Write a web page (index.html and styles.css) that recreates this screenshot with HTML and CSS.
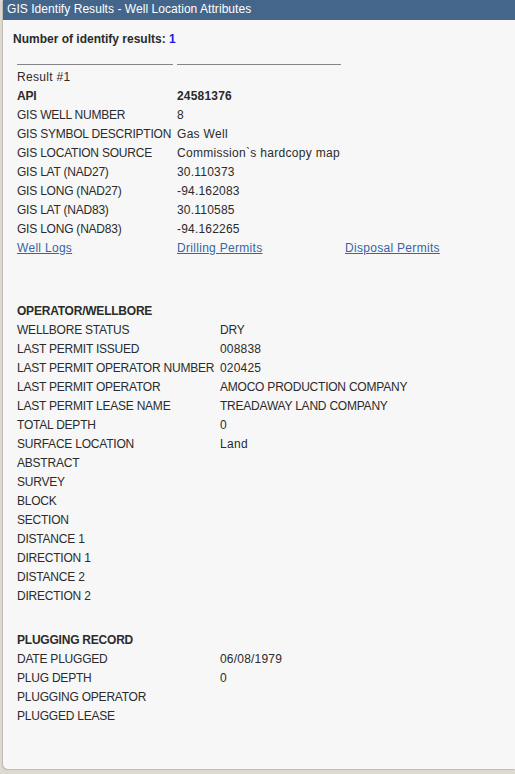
FILE: index.html
```html
<!DOCTYPE html>
<html>
<head>
<meta charset="utf-8">
<link rel="stylesheet" href="styles.css">
</head>
<body>
<div class="dialog">
  <div class="titlebar">GIS Identify Results - Well Location Attributes</div>
  <div class="content">
    <div class="count">Number of identify results: <span class="num">1</span></div>
    <div class="results">
      <div class="head">
        <div class="hcell c1"></div>
        <div class="hcell c2"></div>
      </div>
      <div class="grid g1">
        <div class="lc">Result #1</div><div></div><div></div>
        <div class="b">API</div><div class="b n">24581376</div><div></div>
        <div>GIS WELL NUMBER</div><div class="n">8</div><div></div>
        <div>GIS SYMBOL DESCRIPTION</div><div class="lc">Gas Well</div><div></div>
        <div>GIS LOCATION SOURCE</div><div class="lc">Commission`s hardcopy map</div><div></div>
        <div>GIS LAT (NAD27)</div><div class="n">30.110373</div><div></div>
        <div>GIS LONG (NAD27)</div><div class="n">-94.162083</div><div></div>
        <div>GIS LAT (NAD83)</div><div class="n">30.110585</div><div></div>
        <div>GIS LONG (NAD83)</div><div class="n">-94.162265</div><div></div>
        <div class="lc"><a href="#">Well Logs</a></div><div class="lc"><a href="#">Drilling Permits</a></div><div class="lc"><a href="#">Disposal Permits</a></div>
        <div class="empty"></div><div></div><div></div>
      </div>
      <div class="grid g2 section">
        <div class="b">OPERATOR/WELLBORE</div><div></div>
        <div>WELLBORE STATUS</div><div>DRY</div>
        <div>LAST PERMIT ISSUED</div><div class="n">008838</div>
        <div>LAST PERMIT OPERATOR NUMBER</div><div class="n">020425</div>
        <div>LAST PERMIT OPERATOR</div><div>AMOCO PRODUCTION COMPANY</div>
        <div>LAST PERMIT LEASE NAME</div><div>TREADAWAY LAND COMPANY</div>
        <div>TOTAL DEPTH</div><div class="n">0</div>
        <div>SURFACE LOCATION</div><div class="lc">Land</div>
        <div>ABSTRACT</div><div></div>
        <div>SURVEY</div><div></div>
        <div>BLOCK</div><div></div>
        <div>SECTION</div><div></div>
        <div>DISTANCE 1</div><div></div>
        <div>DIRECTION 1</div><div></div>
        <div>DISTANCE 2</div><div></div>
        <div>DIRECTION 2</div><div></div>
      </div>
      <div class="grid g2 section">
        <div class="b">PLUGGING RECORD</div><div></div>
        <div>DATE PLUGGED</div><div class="n">06/08/1979</div>
        <div>PLUG DEPTH</div><div class="n">0</div>
        <div>PLUGGING OPERATOR</div><div></div>
        <div>PLUGGED LEASE</div><div></div>
      </div>
    </div>
  </div>
</div>
</body>
</html>
```
FILE: styles.css
```css
html, body {
  margin: 0;
  padding: 0;
}
body {
  background: #dedad0;
  font-family: "Liberation Sans", Arial, sans-serif;
  font-size: 12px;
  color: #2b2b2b;
  height: 774px;
  overflow: hidden;
}
.dialog {
  margin-left: 3px;
  width: 512px;
  height: 769px;
  background: #f7f7f7;
  border-bottom-left-radius: 5px;
  box-shadow: -1px 1px 1px rgba(0,0,0,0.15);
}
.titlebar {
  height: 20px;
  line-height: 19px;
  background: #45668b;
  color: #ffffff;
  padding-left: 4px;
  font-size: 12px;
  letter-spacing: 0.05px;
}
.content {
  padding: 11px 10px 0 10px;
}
.count {
  font-weight: bold;
  line-height: 16px;
}
.num {
  color: #1a1ae6;
}
.results {
  padding-left: 4px;
}
.head {
  display: flex;
  margin-top: 17px;
  height: 1px;
  margin-bottom: 3px;
}
.hcell {
  border-top: 1px solid #858585;
}
.hcell.c1 {
  width: 156px;
  margin-right: 4px;
}
.hcell.c2 {
  width: 164px;
}
.grid {
  display: grid;
  grid-auto-rows: 19px;
  line-height: 19px;
  white-space: nowrap;
  letter-spacing: -0.22px;
}
.grid .lc {
  letter-spacing: 0.3px;
}
.grid .n {
  letter-spacing: 0.2px;
}
.g1 {
  grid-template-columns: 160px 168px 1fr;
}
.g2 {
  grid-template-columns: 203px 1fr;
}
.section {
  margin-top: 25px;
}
.b {
  font-weight: bold;
}
a {
  color: #3865a3;
  text-decoration: underline;
}
```
